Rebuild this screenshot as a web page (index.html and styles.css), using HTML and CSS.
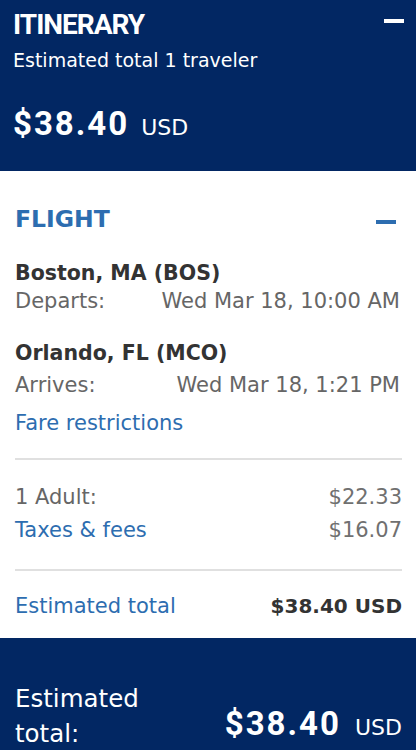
FILE: index.html
```html
<!DOCTYPE html>
<html lang="en">
<head>
<meta charset="utf-8">
<title>Itinerary</title>
<link rel="stylesheet" href="styles.css">
</head>
<body>
<div class="page">
  <header class="summary">
    <div class="summary-top">
      <h1 class="summary-title">ITINERARY</h1>
      <span class="minus minus-white" aria-label="Collapse"></span>
    </div>
    <p class="summary-sub">Estimated total 1 traveler</p>
    <div class="price">
      <span class="price-amount">$38.40</span>
      <span class="price-cur">USD</span>
    </div>
  </header>

  <section class="flight">
    <div class="flight-head">
      <h2 class="flight-title">FLIGHT</h2>
      <span class="minus minus-blue" aria-label="Collapse"></span>
    </div>

    <div class="leg leg-first">
      <div class="city">Boston, MA (BOS)</div>
      <div class="row muted">
        <span>Departs:</span>
        <span class="time">Wed Mar 18, 10:00 AM</span>
      </div>
    </div>

    <div class="leg">
      <div class="city">Orlando, FL (MCO)</div>
      <div class="row muted">
        <span>Arrives:</span>
        <span class="time">Wed Mar 18, 1:21 PM</span>
      </div>
    </div>

    <a class="link fare" href="#">Fare restrictions</a>

    <hr class="divider divider-first">

    <div class="row muted adult">
      <span>1 Adult:</span>
      <span class="amt">$22.33</span>
    </div>
    <div class="row taxes">
      <a class="link" href="#">Taxes &amp; fees</a>
      <span class="amt">$16.07</span>
    </div>

    <hr class="divider divider-second">

    <div class="row total-row">
      <a class="link" href="#">Estimated total</a>
      <span class="total-amt">$38.40 USD</span>
    </div>
  </section>

  <footer class="footer">
    <div class="footer-label">Estimated total:</div>
    <div class="price footer-price">
      <span class="price-amount">$38.40</span>
      <span class="price-cur">USD</span>
    </div>
  </footer>
</div>
</body>
</html>
```

FILE: styles.css
```css
* { box-sizing: border-box; }

html, body {
  margin: 0;
  padding: 0;
  background: #ffffff;
}

body {
  font-family: "DejaVu Sans", "Liberation Sans", Arial, sans-serif;
  color: #333333;
}

.page {
  width: 416px;
}

/* ---------- header ---------- */
.summary {
  background: #022763;
  color: #ffffff;
  padding: 10px 12px 27px 13px;
  height: 171px;
}

.summary-top {
  display: flex;
  justify-content: space-between;
  align-items: flex-start;
}

.summary-title {
  margin: 0;
  font-family: Roboto, "Liberation Sans", sans-serif;
  font-weight: 700;
  font-size: 28px;
  line-height: 30px;
  letter-spacing: -1px;
}

.minus {
  display: block;
  width: 20px;
  height: 4px;
}

.minus-white {
  background: #ffffff;
  margin-top: 9px;
}

.minus-blue {
  background: #2d6db0;
  margin-top: 16px;
  margin-right: 6px;
}

.summary-sub {
  margin: 7px 0 0;
  font-size: 19px;
  line-height: 26px;
}

.price {
  display: flex;
  align-items: baseline;
  gap: 12px;
  margin-top: 31px;
  line-height: 40px;
}

.price-amount {
  font-family: Roboto, "Liberation Sans", sans-serif;
  font-weight: 700;
  font-size: 33px;
  letter-spacing: 2px;
}

.price-cur {
  font-size: 22px;
}

/* ---------- flight ---------- */
.flight {
  padding: 33px 14px 18px 15px;
}

.flight-head {
  display: flex;
  justify-content: space-between;
  align-items: flex-start;
}

.flight-title {
  margin: 0;
  font-size: 23.5px;
  line-height: 30px;
  font-weight: 700;
  color: #2d6db0;
}

.leg {
  margin-top: 24px;
}

.leg-first {
  margin-top: 25px;
}

.city {
  font-size: 20.5px;
  line-height: 28px;
  font-weight: 700;
  color: #333333;
}

.row {
  display: flex;
  justify-content: space-between;
  align-items: baseline;
  font-size: 21px;
  line-height: 28px;
}

.muted {
  color: #666666;
}

.leg .row {
  margin-top: 0;
}

.leg + .leg .row {
  margin-top: 4px;
}

.time {
  margin-right: 2px;
}

.link {
  color: #2d6db0;
  text-decoration: none;
}

.fare {
  display: block;
  margin-top: 10px;
  font-size: 21px;
  line-height: 28px;
}

.divider {
  border: 0;
  height: 2px;
  background: #e0e0e0;
  margin: 0;
}

.divider-first {
  margin-top: 21px;
}

.adult {
  margin-top: 23px;
}

.taxes {
  margin-top: 5px;
}

.amt {
  color: #707070;
}

.divider-second {
  margin-top: 25px;
}

.total-row {
  margin-top: 21px;
}

.total-amt {
  font-size: 20px;
  font-weight: 700;
  color: #333333;
}

/* ---------- footer ---------- */
.footer {
  background: #022763;
  color: #ffffff;
  display: flex;
  justify-content: space-between;
  align-items: flex-end;
  padding: 43px 14px 0 15px;
  height: 130px;
  align-content: flex-start;
}

.footer {
  align-items: flex-start;
}

.footer-label {
  width: 150px;
  font-size: 24.5px;
  line-height: 35px;
}

.footer-price {
  margin-top: 23px;
  gap: 14px;
}
```
